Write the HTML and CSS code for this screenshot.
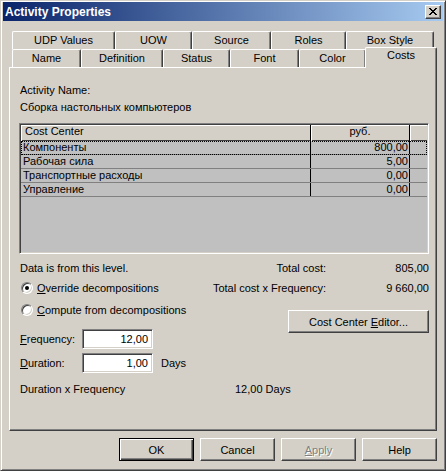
FILE: index.html
```html
<!DOCTYPE html>
<html lang="en">
<head>
    <meta charset="UTF-8">
    <title>Activity Properties</title>
    <link rel="stylesheet" href="styles.css">
</head>
<body>
    <div class="window">
        <div class="titlebar">
            <span class="title">Activity Properties</span>
            <button class="close-btn">
                <svg width="8" height="7" viewBox="0 0 8 7" shape-rendering="crispEdges">
                    <path fill="#000" d="M0 0h2v1H0zM6 0h2v1H6zM1 1h2v1H1zM5 1h2v1H5zM2 2h4v1H2zM3 3h2v1H3zM2 4h4v1H2zM1 5h2v1H1zM5 5h2v1H5zM0 6h2v1H0zM6 6h2v1H6z"/>
                </svg>
            </button>
        </div>

        <div class="dialog-body">
            <div class="tabs">
                <div class="tab-row row-back">
                    <div class="tab">UDP Values</div>
                    <div class="tab">UOW</div>
                    <div class="tab">Source</div>
                    <div class="tab">Roles</div>
                    <div class="tab">Box Style</div>
                </div>
                <div class="tab-row row-front">
                    <div class="tab">Name</div>
                    <div class="tab">Definition</div>
                    <div class="tab">Status</div>
                    <div class="tab">Font</div>
                    <div class="tab">Color</div>
                    <div class="tab active">Costs</div>
                </div>
            </div>

            <div class="panel">
                <div class="line">Activity Name:</div>
                <div class="line activity-name">Сборка настольных компьютеров</div>

                <div class="cost-table">
                    <div class="ct-head">
                        <div class="ct-cell">Cost Center</div>
                        <div class="ct-cell center">руб.</div>
                        <div class="ct-cell last"></div>
                    </div>
                    <div class="ct-row focused">
                        <div class="ct-cell">Компоненты</div>
                        <div class="ct-cell num">800,00</div>
                        <div class="ct-cell last"></div>
                    </div>
                    <div class="ct-row">
                        <div class="ct-cell">Рабочая сила</div>
                        <div class="ct-cell num">5,00</div>
                        <div class="ct-cell last"></div>
                    </div>
                    <div class="ct-row">
                        <div class="ct-cell">Транспортные расходы</div>
                        <div class="ct-cell num">0,00</div>
                        <div class="ct-cell last"></div>
                    </div>
                    <div class="ct-row">
                        <div class="ct-cell">Управление</div>
                        <div class="ct-cell num">0,00</div>
                        <div class="ct-cell last"></div>
                    </div>
                </div>

                <div class="summary">
                    <div class="summary-left">
                        <div class="line">Data is from this level.</div>
                        <label class="radio-row first">
                            <span class="radio checked"></span>
                            <span><u>O</u>verride decompositions</span>
                        </label>
                        <label class="radio-row">
                            <span class="radio"></span>
                            <span><u>C</u>ompute from decompositions</span>
                        </label>
                        <div class="field-row first">
                            <span class="field-label"><u>F</u>requency:</span>
                            <input type="text" class="num-input" value="12,00">
                        </div>
                        <div class="field-row">
                            <span class="field-label"><u>D</u>uration:</span>
                            <input type="text" class="num-input" value="1,00">
                            <span class="unit">Days</span>
                        </div>
                    </div>
                    <div class="summary-right">
                        <div class="totals">
                            <span>Total cost:</span>
                            <span>805,00</span>
                            <span>Total cost x Frequency:</span>
                            <span>9 660,00</span>
                        </div>
                        <button class="btn editor-btn">Cost Center <u>E</u>ditor...</button>
                    </div>
                </div>

                <div class="dxf">
                    <span class="dxf-label">Duration x Frequency</span>
                    <span>12,00 Days</span>
                </div>
            </div>

            <div class="button-bar">
                <button class="btn default">OK</button>
                <button class="btn">Cancel</button>
                <button class="btn disabled"><u>A</u>pply</button>
                <button class="btn">Help</button>
            </div>
        </div>
    </div>
</body>
</html>
```

FILE: styles.css
```css
* {
    box-sizing: border-box;
}

body {
    margin: 0;
    background-color: #d4d0c8;
    font-family: "Liberation Sans", Arial, sans-serif;
    font-size: 11px;
    color: #000;
}

u {
    text-decoration: underline;
    text-underline-offset: 1px;
}

.window {
    width: 446px;
    height: 471px;
    background-color: #d4d0c8;
    border: 1px solid;
    border-color: #d4d0c8 #404040 #404040 #d4d0c8;
    box-shadow: inset 1px 1px #fff, inset -1px -1px #808080;
    padding: 1px 2px 2px 2px;
}

/* title bar */
.titlebar {
    height: 19px;
    display: flex;
    align-items: center;
    padding: 0 2px;
    background: linear-gradient(to right, #0a246a, #a6caf0);
}

.title {
    color: #fff;
    font-weight: bold;
    font-size: 12px;
}

.close-btn {
    margin-left: auto;
    width: 16px;
    height: 14px;
    padding: 0;
    display: flex;
    align-items: center;
    justify-content: center;
    background-color: #d4d0c8;
    border: 1px solid;
    border-color: #fff #404040 #404040 #fff;
    box-shadow: inset -1px -1px #808080;
}

.dialog-body {
    padding: 10px 6px 7px 6px;
}

/* tabs */
.tabs {
    margin-left: 3px;
}

.tab-row {
    display: grid;
    height: 18px;
}

.row-back {
    grid-template-columns: 103px 77px 79px 75px 88px;
}

.row-front {
    grid-template-columns: 69px 82px 67px 69px 67px 69px;
}

.tab {
    border-top: 1px solid #fff;
    border-left: 1px solid #fff;
    border-right: 1px solid #404040;
    border-radius: 2px 2px 0 0;
    box-shadow: inset -1px 0 #808080;
    text-align: center;
    padding-top: 2px;
    line-height: 13px;
    background-color: #d4d0c8;
}

.tab.active {
    position: relative;
    z-index: 1;
    margin: -2px -2px -1px -1px;
    padding-top: 1px;
}

/* panel */
.panel {
    width: 428px;
    height: 364px;
    border: 1px solid;
    border-color: #fff #404040 #404040 #fff;
    box-shadow: inset -1px -1px #808080;
    padding: 16px 7px 0 10px;
}

.line {
    line-height: 13px;
}

.activity-name {
    margin-top: 4px;
}

/* cost grid */
.cost-table {
    margin: 9px 0 0 -1px;
    height: 131px;
    padding: 1px;
    background-color: #c0c0c0;
    border: 1px solid;
    border-color: #808080 #fff #fff #808080;
    box-shadow: inset 1px 1px #404040, inset -1px -1px #d4d0c8;
}

.ct-head, .ct-row {
    display: grid;
    grid-template-columns: 290px 99px 17px;
}

.ct-head {
    height: 16px;
    background-color: #d4d0c8;
}

.ct-head .ct-cell {
    line-height: 13px;
    padding-left: 4px;
    box-shadow: inset 1px 1px #fff, inset 0 -1px #404040;
}

.ct-head .ct-cell.center {
    text-align: center;
    padding-left: 0;
}

.ct-cell {
    border-right: 1px solid #000;
    white-space: nowrap;
    overflow: hidden;
}

.ct-cell.last {
    border-right: none;
}

.ct-row {
    height: 14px;
    border-bottom: 1px solid #808080;
}

.ct-row .ct-cell {
    line-height: 13px;
    padding-left: 2px;
}

.ct-row .ct-cell.num {
    text-align: right;
    padding: 0 1px 0 0;
}

.ct-row.focused {
    outline: 1px dotted #000;
    outline-offset: -1px;
}

/* summary area */
.summary {
    margin-top: 8px;
    display: flex;
    justify-content: space-between;
}

.radio-row {
    display: flex;
    align-items: center;
    gap: 4px;
    height: 16px;
    margin-top: 6px;
}

.radio-row.first {
    margin-top: 5px;
}

.radio {
    width: 12px;
    height: 12px;
    margin-left: 1px;
    border-radius: 50%;
    border: 1px solid;
    border-color: #808080 #fff #fff #808080;
    box-shadow: inset 1px 1px #404040, inset -1px -1px #d4d0c8;
    background-color: #fff;
    display: flex;
    align-items: center;
    justify-content: center;
}

.radio.checked::after {
    content: "";
    width: 4px;
    height: 4px;
    border-radius: 50%;
    background-color: #000;
}

.field-row {
    display: flex;
    align-items: center;
    height: 20px;
    margin-top: 4px;
}

.field-row.first {
    margin-top: 11px;
}

.field-label {
    width: 62px;
}

.num-input {
    width: 71px;
    height: 20px;
    padding: 0 4px 0 0;
    text-align: right;
    font-family: "Liberation Sans", Arial, sans-serif;
    font-size: 11px;
    color: #000;
    background-color: #fff;
    border: 1px solid;
    border-color: #808080 #fff #fff #808080;
    box-shadow: inset 1px 1px #404040, inset -1px -1px #d4d0c8;
    outline: none;
}

.unit {
    margin-left: 8px;
}

.summary-right {
    width: 230px;
    display: flex;
    flex-direction: column;
}

.totals {
    display: grid;
    grid-template-columns: 1fr 103px;
    row-gap: 7px;
    line-height: 13px;
    text-align: right;
    white-space: nowrap;
}

.editor-btn {
    margin: 15px 0 0 auto;
    width: 141px;
}

.dxf {
    margin-top: 10px;
    line-height: 13px;
    display: flex;
}

.dxf-label {
    width: 215px;
}

/* buttons */
.btn {
    height: 23px;
    padding: 0;
    font-family: "Liberation Sans", Arial, sans-serif;
    font-size: 11px;
    color: #000;
    background-color: #d4d0c8;
    border: 1px solid;
    border-color: #fff #404040 #404040 #fff;
    box-shadow: inset -1px -1px #808080;
}

.button-bar {
    margin-top: 7px;
    display: flex;
    justify-content: flex-end;
    gap: 6px;
}

.button-bar .btn {
    width: 75px;
}

.btn.default {
    border-color: #000;
    box-shadow: inset 1px 1px #fff, inset -1px -1px #404040, inset -2px -2px #808080;
}

.btn.disabled {
    color: #808080;
    text-shadow: 1px 1px #fff;
}
```
